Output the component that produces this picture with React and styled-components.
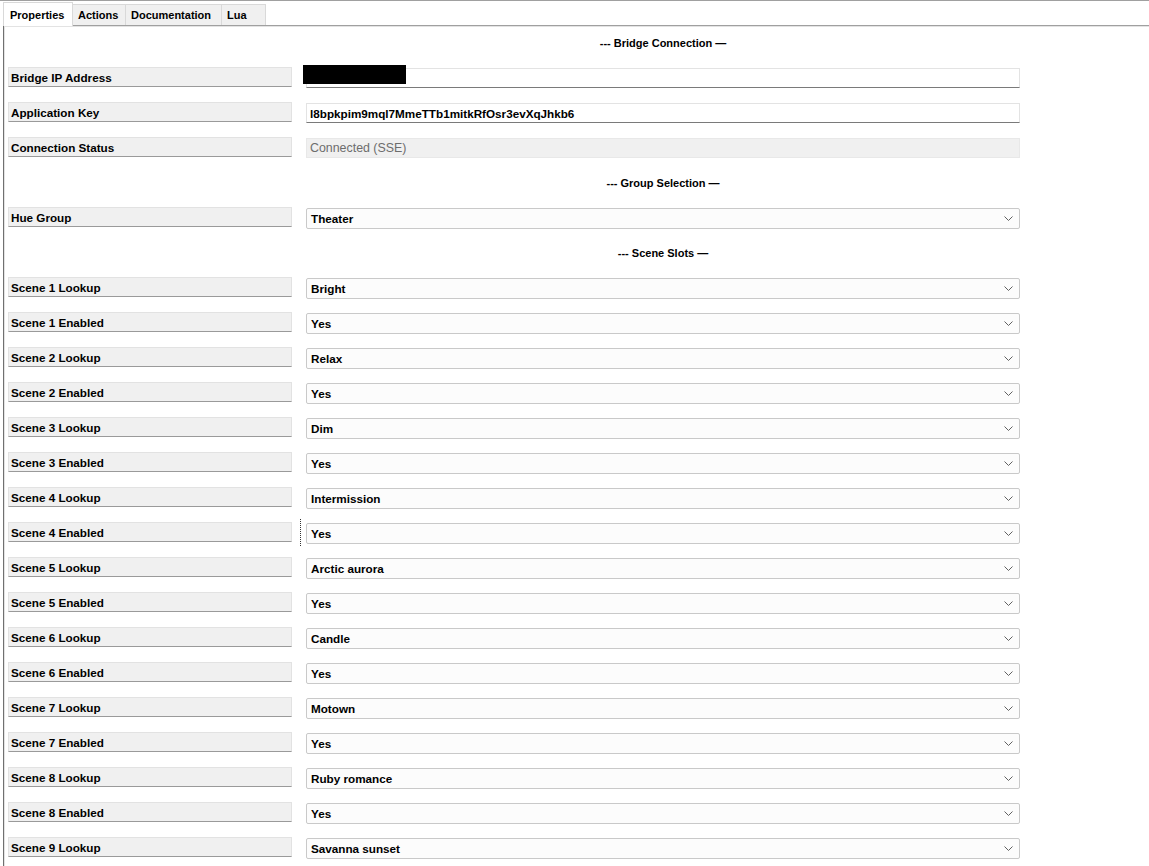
import React from "react";
import styled, { createGlobalStyle } from "styled-components";

const GlobalStyle = createGlobalStyle`
  html, body {
    margin: 0;
    padding: 0;
    background: #ffffff;
    overflow: hidden;
  }
  body {
    font-family: "Liberation Sans", Arial, sans-serif;
    font-size: 11px;
    color: #000;
  }
`;

const Window = styled.div`
  width: 1149px;
  height: 866px;
  border-top: 1px solid #a0a0a0;
  box-sizing: border-box;
  overflow: hidden;
  background: #fff;
`;

const TabStrip = styled.div`
  display: flex;
  align-items: flex-end;
  height: 24px;
  padding-left: 3px;
`;

const Tab = styled.div`
  display: flex;
  align-items: center;
  box-sizing: border-box;
  height: ${(p) => (p.$active ? "24px" : "21px")};
  padding: 0 ${(p) => (p.$active ? "6px" : "5px")};
  margin-bottom: ${(p) => (p.$active ? "-1px" : "0")};
  background: ${(p) => (p.$active ? "#ffffff" : "#f0f0f0")};
  border: 1px solid #d9d9d9;
  border-bottom: none;
  margin-left: ${(p) => (p.$first ? "0" : "-1px")};
  font-weight: bold;
  font-size: 11px;
  position: relative;
  z-index: ${(p) => (p.$active ? 2 : 1)};
  width: ${(p) => p.$w}px;
`;

const Panel = styled.div`
  position: relative;
  margin-left: 3px;
  border-top: 1px solid #a0a0a0;
  border-left: 1px solid #707070;
  box-shadow: inset 1px 1px 0 #e3e3e3;
  height: 900px;
`;

const Grid = styled.div`
  display: grid;
  grid-template-columns: 284px 714px;
  column-gap: 14px;
  grid-auto-rows: 35px;
  padding-left: 4px;
`;

const Heading = styled.div`
  grid-column: 2;
  display: flex;
  align-items: center;
  justify-content: center;
  font-weight: bold;
  font-size: 11px;
  padding-bottom: 1px;
`;

const Label = styled.div`
  align-self: start;
  margin-top: 6px;
  height: 20px;
  box-sizing: border-box;
  display: flex;
  align-items: center;
  padding: 1px 0 0 2px;
  background: #f0f0f0;
  border: 1px solid #e2e2e2;
  border-bottom: 1px solid #9a9a9a;
  font-weight: bold;
  font-size: 11.7px;
`;

const ValueCell = styled.div`
  position: relative;
  align-self: start;
  margin-top: 7px;
  ${(p) =>
    p.$focus &&
    `
    &::before {
      content: "";
      position: absolute;
      left: -6px;
      top: -4px;
      height: 27px;
      border-left: 1px dotted #333;
    }
  `}
`;

const TextField = styled.div`
  height: 20px;
  box-sizing: border-box;
  display: flex;
  align-items: center;
  padding-left: 3px;
  background: ${(p) => (p.$disabled ? "#f0f0f0" : "#ffffff")};
  border: 1px solid ${(p) => (p.$disabled ? "#e8e8e8" : "#e3e3e3")};
  border-bottom: 1px solid ${(p) => (p.$disabled ? "#e8e8e8" : "#7a7a7a")};
  color: ${(p) => (p.$disabled ? "#6d6d6d" : "#000")};
  font-weight: ${(p) => (p.$disabled ? "normal" : "bold")};
  font-size: ${(p) => (p.$disabled ? "12.4px" : "11.7px")};
`;

const Select = styled.div`
  height: 21px;
  box-sizing: border-box;
  display: flex;
  align-items: center;
  justify-content: space-between;
  padding: 0 6px 0 4px;
  background: #fcfcfc;
  border: 1px solid #c9c9c9;
  border-radius: 2px;
  font-weight: bold;
  font-size: 11.7px;
`;

const Redacted = styled.div`
  position: absolute;
  left: -3px;
  top: -3px;
  width: 103px;
  height: 19px;
  background: #000;
`;

const Chevron = () => (
  <svg width="9" height="5" viewBox="0 0 9 5" aria-hidden="true">
    <path d="M0.5 0.5 L4.5 4.5 L8.5 0.5" fill="none" stroke="#606060" strokeWidth="1" />
  </svg>
);

const scenes = [
  "Bright",
  "Relax",
  "Dim",
  "Intermission",
  "Arctic aurora",
  "Candle",
  "Motown",
  "Ruby romance",
  "Savanna sunset",
];

const rows = [
  { heading: "--- Bridge Connection \u2014" },
  { label: "Bridge IP Address", kind: "text", value: "", redacted: true },
  { label: "Application Key", kind: "text", value: "l8bpkpim9mql7MmeTTb1mitkRfOsr3evXqJhkb6" },
  { label: "Connection Status", kind: "disabled", value: "Connected (SSE)" },
  { heading: "--- Group Selection \u2014" },
  { label: "Hue Group", kind: "select", value: "Theater" },
  { heading: "--- Scene Slots \u2014" },
  ...scenes.flatMap((name, i) => {
    const n = i + 1;
    const out = [{ label: `Scene ${n} Lookup`, kind: "select", value: name }];
    if (n < 9) out.push({ label: `Scene ${n} Enabled`, kind: "select", value: "Yes", focus: n === 4 });
    return out;
  }),
];

const tabs = [
  { name: "Properties", w: 70 },
  { name: "Actions", w: 54 },
  { name: "Documentation", w: 97 },
  { name: "Lua", w: 45 },
];

export default function App() {
  return (
    <Window>
      <GlobalStyle />
      <TabStrip>
        {tabs.map((t, i) => (
          <Tab key={t.name} $active={i === 0} $first={i === 0} $w={t.w}>
            {t.name}
          </Tab>
        ))}
      </TabStrip>
      <Panel>
        <Grid>
          {rows.map((r, i) => {
            if (r.heading) return <Heading key={i}>{r.heading}</Heading>;
            return (
              <React.Fragment key={i}>
                <Label>{r.label}</Label>
                <ValueCell $focus={r.focus}>
                  {r.kind === "select" ? (
                    <Select>
                      <span>{r.value}</span>
                      <Chevron />
                    </Select>
                  ) : (
                    <TextField $disabled={r.kind === "disabled"}>{r.value}</TextField>
                  )}
                  {r.redacted && <Redacted />}
                </ValueCell>
              </React.Fragment>
            );
          })}
        </Grid>
      </Panel>
    </Window>
  );
}
